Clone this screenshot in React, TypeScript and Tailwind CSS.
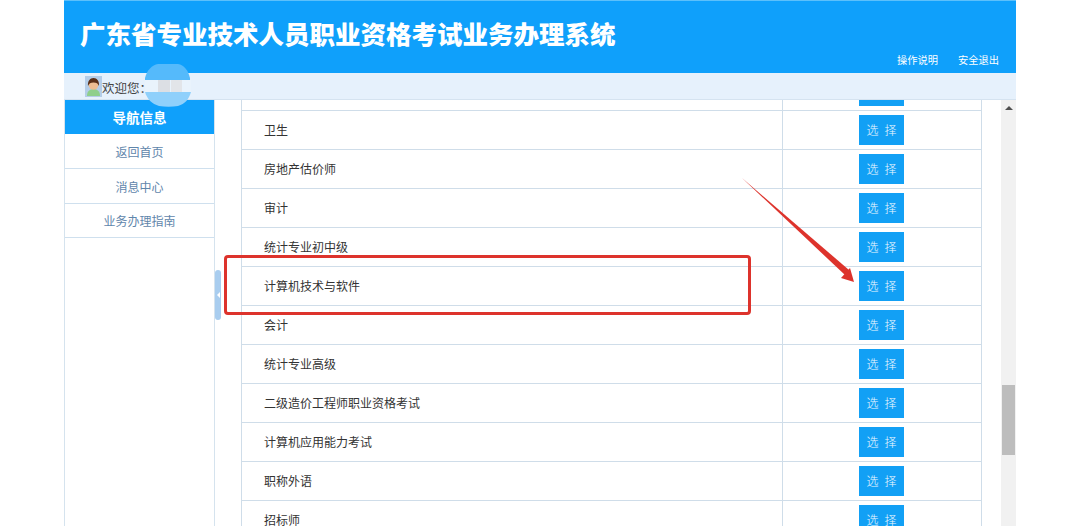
const rows = [
  "",
  "卫生",
  "房地产估价师",
  "审计",
  "统计专业初中级",
  "计算机技术与软件",
  "会计",
  "统计专业高级",
  "二级造价工程师职业资格考试",
  "计算机应用能力考试",
  "职称外语",
  "招标师",
];

const navItems = ["返回首页", "消息中心", "业务办理指南"];

function Avatar() {
  return (
    <svg width="17" height="21" viewBox="0 0 17 21" className="mt-[-3px] shrink-0">
      <rect width="17" height="21" fill="#b4cde8" />
      <path d="M2 20c0-5 3-7 6.500-7s6.500 2 6.500 7z" fill="#8fcf8c" />
      <circle cx="8.500" cy="9" r="4.800" fill="#eebd92" />
      <path d="M3 10c-.5-5 2-8 5.500-8s6 3 5.500 8c-1-2.500-2.500-3.500-5.500-3.500S4 7.500 3 10z" fill="#5a2f18" />
    </svg>
  );
}

function Row({ name }: { name: string }) {
  return (
    <div className="flex h-[39.05px] border-b border-[#cfdde9]">
      <div className="flex-1 flex items-center pl-[22px] text-[12px] text-[#333]">{name}</div>
      <div className="w-[199px] flex items-center border-l border-[#cfdde9] pl-[76px]">
        <button className="w-[45px] h-[30px] bg-[#12a0f5] text-[#eef8ff] text-[12px] font-light tracking-[6px] pl-[6px]">选择</button>
      </div>
    </div>
  );
}

export default function App() {
  return (
    <div className="relative h-[526px] w-[1080px] overflow-hidden bg-white font-['Noto_Sans_CJK_SC','Liberation_Sans',sans-serif]">
      <div className="mx-[64px] flex h-full flex-col">
        <header className="flex h-[73px] shrink-0 flex-col border-t border-[#5cc0fb] bg-[#0fa0fb] pl-[16px] pr-[17px]">
          <h1 className="mt-[14px] text-[25.500px] leading-[36px] font-black text-white">广东省专业技术人员职业资格考试业务办理系统</h1>
          <div className="mt-[2px] flex justify-end gap-[20px] text-[10.250px] leading-[14px] text-white">
            <span>操作说明</span>
            <span>安全退出</span>
          </div>
        </header>

        <div className="flex h-[27px] shrink-0 items-center border-b border-[#d5e3f0] bg-[#e6f1fc] pl-[21px] pt-[4px] text-[12.500px] text-[#444]">
          <Avatar />
          <span>欢迎您：</span>
        </div>

        <div className="flex min-h-0 flex-1">
          <aside className="w-[151px] shrink-0 border-x border-[#d5e3ee]">
            <div className="flex h-[34px] items-center justify-center bg-[#0fa0fb] text-[13.500px] font-bold text-white">导航信息</div>
            {navItems.map((item) => (
              <div key={item} className="flex h-[34.800px] items-center justify-center border-b border-[#cfe0ee] pt-[2px] text-[12px] text-[#5f86ab]">
                {item}
              </div>
            ))}
          </aside>

          <main className="min-w-0 flex-1 overflow-hidden pl-[26px] pr-[19px]">
            <div className="mt-[-28.050px] border-x border-[#cfdde9]">
              {rows.map((name, i) => (
                <Row key={i} name={name} />
              ))}
            </div>
          </main>

          <div className="flex w-[15px] shrink-0 flex-col bg-[#f1f1f1]">
            <div className="flex h-[15px] items-center justify-center">
              <div className="h-0 w-0 border-x-[4px] border-b-[4px] border-x-transparent border-b-[#505050]" />
            </div>
            <div className="mx-px mt-[270px] h-[70px] bg-[#bdbdbd]" />
          </div>
        </div>
      </div>

      {/* 打码 */}
      <svg className="absolute left-[144px] top-[64px]" width="47" height="43" viewBox="0 0 47 43">
        <path d="M14 0h20c6 1 10 6 12 14v2H1v-2C3 6 8 1 14 0z" fill="#55bafb" />
        <rect x="1" y="16" width="46" height="12" fill="#e9f3fc" />
        <rect x="14" y="16" width="12" height="12" fill="#dcdfe4" />
        <rect x="27" y="16" width="11" height="12" fill="#e2e5e9" />
        <path d="M1 28h46c-2 7-6 12-13 14-6 1-13 1-19 0C8 40 3 35 1 28z" fill="#8fd0fb" />
      </svg>

      {/* 折叠手柄 */}
      <div className="absolute left-[215px] top-[270px] flex h-[50px] w-[6px] items-center justify-center rounded-sm bg-[#a9cdef]">
        <div className="h-0 w-0 border-y-[3px] border-r-[3px] border-y-transparent border-r-white" />
      </div>

      {/* 标注 */}
      <div className="absolute left-[224px] top-[255px] h-[60px] w-[527px] rounded-[4px] border-[3px] border-[#dd332c]" />
      <svg className="absolute left-[735px] top-[170px]" width="130" height="125" viewBox="0 0 130 125">
        <path d="M7 8 L114 100 L110 105 Z" fill="#dd332c" />
        <path d="M119 112 L106 108 L115 98 Z" fill="#dd332c" />
      </svg>
    </div>
  );
}
